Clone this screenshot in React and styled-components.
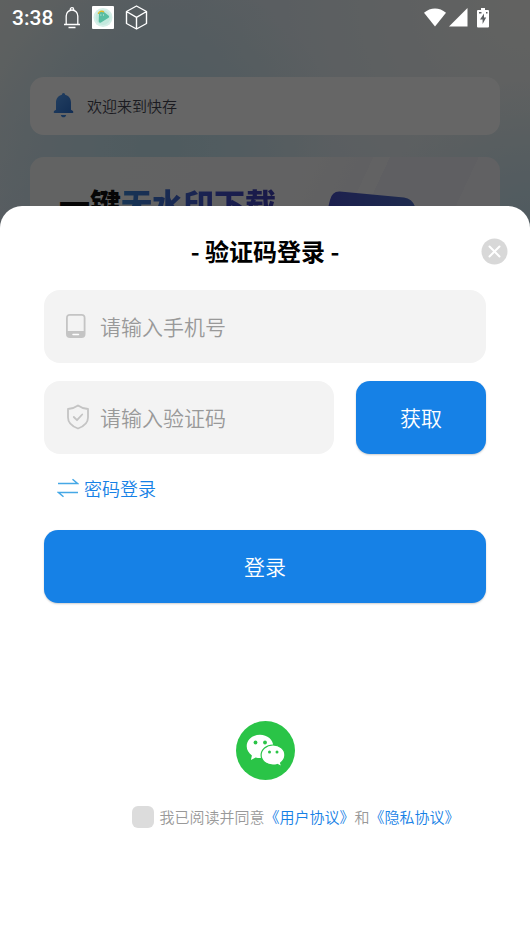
import React, { useState } from 'react';
import styled, { createGlobalStyle, css } from 'styled-components';

const colors = {
  primary: '#1681e6',
  field: '#f3f3f3',
  muted: '#999',
  icon: '#c4c4c4',
  white: '#fff',
};

const GlobalStyle = createGlobalStyle`
  *, *::before, *::after {
    box-sizing: border-box;
  }

  body {
    margin: 0;
    font-family: 'Noto Sans CJK SC', 'Noto Sans', sans-serif;
    font-weight: 350;
  }

  button, input {
    font-family: inherit;
    font-weight: inherit;
  }
`;

const Screen = styled.div`
  position: relative;
  min-height: 100vh;
  overflow: hidden;
  background:
    radial-gradient(circle at 30% 150px, #c6e4ee 20px, rgba(198, 228, 238, 0) 180px),
    radial-gradient(circle at 100% 230px, #c6e2ee, rgba(198, 226, 238, 0) 150px),
    radial-gradient(circle at 100% 0, #f6f6f2, rgba(240, 244, 240, 0) 340px),
    linear-gradient(125deg, #ecf2f0 0, #dae8f2 130px, #dae8f2 100%);
`;

const StatusBar = styled.div`
  position: relative;
  z-index: 2;
  display: flex;
  align-items: center;
  height: 35px;
  padding: 0 41px 0 12px;
  color: ${colors.white};

  svg {
    display: block;
  }
`;

const Time = styled.span`
  margin-right: 10px;
  font-family: Roboto, sans-serif;
  font-size: 21px;
  font-weight: 500;
  line-height: 24px;
`;

const StatusIcons = styled.div`
  display: flex;
  align-items: center;
  gap: ${props => props.$gap};
`;

const Signals = styled(StatusIcons)`
  margin-left: auto;

  svg:last-child {
    margin-left: 6px;
  }
`;

const Home = styled.main`
  display: flex;
  flex-direction: column;
  gap: 22px;
  padding: 42px 30px 0;
`;

const Notice = styled.div`
  display: flex;
  align-items: center;
  gap: 13px;
  height: 58px;
  padding: 0 23px 2px;
  border-radius: 14px;
  background: ${colors.white};
  color: #444452;
  font-size: 15px;
`;

const Banner = styled.div`
  display: flex;
  align-items: flex-start;
  justify-content: space-between;
  height: 180px;
  padding: 23px 82px 0 29px;
  overflow: hidden;
  border-radius: 14px;
  background: linear-gradient(
    115deg,
    #f6f8f8 0,
    #f5f5f7 50%,
    #f0f0f4 62%,
    #f5f5f8 62% 65%,
    #eeeef4 65% 81%,
    #f3f3f7 81%
  );
`;

const BannerTitle = styled.h2`
  margin: 0;
  color: #111;
  font-size: 31px;
  font-weight: 900;
  line-height: 45px;
  white-space: nowrap;

  span {
    background: linear-gradient(90deg, #3a84d4, #4150c8 60%, #4040b4);
    background-clip: text;
    color: transparent;
  }
`;

const Mask = styled.div`
  position: absolute;
  inset: 0;
  z-index: 1;
  background: rgba(0, 0, 0, 0.6);
`;

const Sheet = styled.section`
  position: absolute;
  right: 0;
  bottom: 0;
  left: 0;
  z-index: 3;
  padding: 27px 44px 114px;
  border-radius: 22px 22px 0 0;
  background: ${colors.white};
`;

const Title = styled.h1`
  margin: 0 0 21px;
  color: #000;
  font-size: 24px;
  font-weight: 700;
  line-height: 36px;
  text-align: center;
`;

const Close = styled.button`
  position: absolute;
  top: 32px;
  right: 22px;
  padding: 0;
  border: 0;
  background: none;
  cursor: pointer;

  svg {
    display: block;
  }
`;

const Form = styled.form`
  display: flex;
  flex-direction: column;
`;

const Row = styled.div`
  display: flex;
  gap: 22px;
  margin-bottom: 18px;
`;

const Field = styled.label`
  display: flex;
  flex: 1;
  align-items: center;
  gap: 10px;
  min-width: 0;
  height: 73px;
  padding: 0 20px 2px;
  border-radius: 16px;
  background: ${colors.field};

  svg {
    flex: none;
  }
`;

const Input = styled.input`
  flex: 1;
  min-width: 0;
  padding: 0;
  border: 0;
  outline: 0;
  background: none;
  color: #333;
  font-size: 21px;
  line-height: 30px;

  &::placeholder {
    color: ${colors.muted};
    opacity: 1;
  }
`;

const button = css`
  height: 73px;
  padding: 0 0 2px;
  border: 0;
  border-radius: 14px;
  background: ${colors.primary};
  box-shadow: 0 1px 2px rgba(0, 0, 0, 0.2);
  color: ${colors.white};
  font-size: 21px;
  cursor: pointer;
`;

const CodeButton = styled.button`
  ${button}
  width: 130px;
`;

const SubmitButton = styled.button`
  ${button}
  width: 100%;
`;

const SwitchButton = styled.button`
  display: flex;
  align-items: center;
  align-self: flex-start;
  gap: 5px;
  margin: 3px 0 29px;
  padding: 0 0 0 13px;
  border: 0;
  background: none;
  color: ${colors.primary};
  font-size: 18px;
  line-height: 26px;
  cursor: pointer;
`;

const WechatButton = styled.button`
  display: block;
  margin: 118px auto 0;
  padding: 0;
  border: 0;
  border-radius: 50%;
  background: none;
  cursor: pointer;

  svg {
    display: block;
  }
`;

const Agreement = styled.div`
  display: flex;
  align-items: center;
  justify-content: center;
  gap: 5px;
  margin-top: 26px;
  padding-left: 62px;
  color: ${colors.muted};
  font-size: 15px;
  line-height: 22px;
  white-space: nowrap;
`;

const Checkbox = styled.input`
  flex: none;
  width: 22px;
  height: 22px;
  margin: 0;
  border-radius: 6px;
  background: #dcdcdc;
  appearance: none;
  cursor: pointer;

  &:checked {
    background: ${colors.primary};
  }
`;

const Link = styled.a`
  color: ${colors.primary};
  text-decoration: none;
`;

const AlarmIcon = () => (
  <svg width="18" height="22" viewBox="0 0 18 22" fill="none" stroke="currentColor" strokeWidth="1.3">
    <path d="M1 17.500h16M3.200 17.500V9a5.800 6 0 0 1 11.600 0v8.500M7.300 3.300V2.400a1.700 1.700 0 0 1 3.400 0v.9M5.500 20.500h7" />
  </svg>
);

const AppIcon = () => (
  <svg width="22" height="23" viewBox="0 0 22 23">
    <rect width="22" height="23" rx="1" fill="#fff" />
    <circle cx="11" cy="11.500" r="9.500" fill="#d5efe8" />
    <circle cx="11" cy="11.500" r="7.500" fill="#c3e9de" />
    <path d="M7 7.500c1-2 3-2.500 5-1.500l4.500 3.500c1 1 .8 2-.3 2.600L9 16.500c-1.500.6-2.300 0-2.300-1.500z" fill="#58bea2" />
    <path d="M6.300 8c.4-2.500 3.500-3.600 5.700-2" fill="none" stroke="#e0b92c" strokeWidth="1.3" />
    <path d="M8.500 9h.8M11 9h.8" stroke="#fff" />
  </svg>
);

const CubeIcon = () => (
  <svg width="23" height="25" viewBox="0 0 23 25" fill="none" stroke="currentColor" strokeWidth="1.4" strokeLinejoin="round">
    <path d="M11.500 1 21.500 6.500v12l-10 5.500-10-5.500v-12zM1.500 6.500l10 5.800 10-5.800M11.500 12.300V24" />
  </svg>
);

const WifiIcon = () => (
  <svg width="22" height="19" viewBox="0 0 22 19" fill="currentColor">
    <path d="M0 4.800C6.500-.9 15.500-.9 22 4.800L11 18.500z" />
  </svg>
);

const CellIcon = () => (
  <svg width="19" height="19" viewBox="0 0 19 19" fill="currentColor">
    <path d="M18.500 0v18.500H0z" />
  </svg>
);

const BatteryIcon = () => (
  <svg width="12" height="20" viewBox="0 0 12 20">
    <path d="M4 0h4v2h3q1 0 1 1v15.500q0 1-1 1H1q-1 0-1-1V3q0-1 1-1h3z" fill="currentColor" />
    <path d="M7 5.500 3 11.500h2.600V16l3.600-6.500H7z" fill="#5c6062" />
    <path d="M2 4.800h2.500M9 4.800h1.500" stroke="#5c6062" strokeWidth="1.500" />
  </svg>
);

const BellIcon = () => (
  <svg width="21" height="25" viewBox="0 0 21 25">
    <defs>
      <linearGradient id="bell" x1="0" y1="0" x2="1" y2="1">
        <stop offset="0" stopColor="#5aa2f4" />
        <stop offset="1" stopColor="#2c6fd0" />
      </linearGradient>
    </defs>
    <path
      d="M10.500 0c1 0 1.600.8 1.600 1.800C15.700 2.600 18 5.600 18 9.500v7.300l2 1.200q1 2-.5 2h-18q-1.500 0-.5-2l2-1.200V9.500c0-3.900 2.300-6.900 5.900-7.700C8.900.8 9.500 0 10.500 0z"
      fill="url(#bell)"
    />
    <path d="M7.800 22h5.400c-.4 1.600-1.300 2.300-2.700 2.300S8.200 23.600 7.800 22z" fill="#3f8ae6" />
  </svg>
);

const BannerArt = () => (
  <svg width="90" height="100" viewBox="0 0 90 100">
    <defs>
      <linearGradient id="art">
        <stop offset="0" stopColor="#4850c4" />
        <stop offset="1" stopColor="#4c6cc4" />
      </linearGradient>
    </defs>
    <path d="M0 28 2 20Q4 11 12 11.500l64 6q8 1 11 9l3 80H0z" fill="url(#art)" />
  </svg>
);

const CloseIcon = () => (
  <svg width="27" height="27" viewBox="0 0 27 27">
    <circle cx="13.500" cy="13.500" r="13" fill="#d8d8d8" />
    <path d="m8.500 8.500 10 10m0-10-10 10" stroke="#fff" strokeWidth="2" strokeLinecap="round" />
  </svg>
);

const PhoneIcon = () => (
  <svg width="26" height="26" viewBox="0 0 26 26">
    <path
      d="M5 1h12.500Q21.500 1 21.500 5v16q0 4-4 4H6q-4 0-4-4V5q0-4 4-4zM5.500 2.800Q3.800 2.800 3.800 4.500V18h15.900V4.500q0-1.700-1.700-1.700z"
      fill={colors.icon}
      fillRule="evenodd"
    />
    <path d="M9 21.500h5.500" stroke="#fff" strokeWidth="1.500" strokeLinecap="round" />
  </svg>
);

const ShieldIcon = () => (
  <svg width="26" height="26" viewBox="0 0 26 26" fill="none" stroke={colors.icon} strokeWidth="1.800" strokeLinecap="round" strokeLinejoin="round">
    <path d="M14 1.500c3 2.200 6.300 3.200 10 3.500v8.500c0 5.500-4.500 9-10 11-5.500-2-10-5.500-10-11V5c3.700-.3 7-1.300 10-3.500z" />
    <path d="m9.800 13 3.200 3.200 5.200-5.700" />
  </svg>
);

const SwapIcon = () => (
  <svg width="22" height="20" viewBox="0 0 22 20" fill="none" stroke="#45a8e6" strokeWidth="1.500">
    <path d="M1 5.500h19.500L15.500 1.200M21 14.500H1.500l5 4.200" />
  </svg>
);

const WechatIcon = () => (
  <svg width="59" height="59" viewBox="0 0 59 59">
    <circle cx="29.500" cy="29.500" r="29.500" fill="#2ac447" />
    <path
      d="M24 13.800c-7.400 0-13.300 5-13.300 11.500 0 3.700 2 6.900 5.200 9.100l-1 4.600 4.800-2.600c1.400.4 2.800.5 4.300.5 7.400 0 13.300-5.200 13.300-11.600S31.400 13.800 24 13.800z"
      fill="#fff"
    />
    <path
      d="M37 24c6.700 0 11.900 4.400 11.900 10.100 0 3.200-1.700 6-4.300 7.800l1.200 3.800-4.400-2.200c-1.400.4-2.800.6-4.400.6-6.700 0-11.900-4.400-11.900-10S30.300 24 37 24z"
      fill="#fff"
      stroke="#2ac447"
      strokeWidth="1.200"
    />
    <g fill="#2ac447">
      <circle cx="19.500" cy="21.500" r="1.900" />
      <circle cx="29" cy="21.500" r="1.900" />
      <circle cx="33.500" cy="31" r="1.500" />
      <circle cx="41" cy="31" r="1.500" />
    </g>
  </svg>
);

const LoginSheet = () => {
  const [phone, setPhone] = useState('');
  const [code, setCode] = useState('');
  const [agreed, setAgreed] = useState(false);

  return (
    <Sheet role="dialog" aria-labelledby="login-title">
      <Title id="login-title">- 验证码登录 -</Title>
      <Close type="button" aria-label="关闭">
        <CloseIcon />
      </Close>
      <Form onSubmit={e => e.preventDefault()}>
        <Row>
          <Field>
            <PhoneIcon />
            <Input
              type="tel"
              aria-label="手机号"
              placeholder="请输入手机号"
              value={phone}
              onChange={e => setPhone(e.target.value)}
            />
          </Field>
        </Row>
        <Row>
          <Field>
            <ShieldIcon />
            <Input
              aria-label="验证码"
              placeholder="请输入验证码"
              value={code}
              onChange={e => setCode(e.target.value)}
            />
          </Field>
          <CodeButton type="button">获取</CodeButton>
        </Row>
        <SwitchButton type="button">
          <SwapIcon />
          密码登录
        </SwitchButton>
        <SubmitButton type="submit">登录</SubmitButton>
      </Form>
      <WechatButton type="button" aria-label="微信登录">
        <WechatIcon />
      </WechatButton>
      <Agreement>
        <Checkbox
          id="agree"
          type="checkbox"
          checked={agreed}
          onChange={e => setAgreed(e.target.checked)}
        />
        <div>
          <label htmlFor="agree">我已阅读并同意</label>
          <Link href="#terms">《用户协议》</Link>和<Link href="#privacy">《隐私协议》</Link>
        </div>
      </Agreement>
    </Sheet>
  );
};

export default () => (
  <>
    <GlobalStyle />
    <Screen>
      <StatusBar>
        <Time>3:38</Time>
        <StatusIcons $gap="11px">
          <AlarmIcon />
          <AppIcon />
          <CubeIcon />
        </StatusIcons>
        <Signals $gap="3px">
          <WifiIcon />
          <CellIcon />
          <BatteryIcon />
        </Signals>
      </StatusBar>
      <Home>
        <Notice>
          <BellIcon />
          欢迎来到快存
        </Notice>
        <Banner>
          <BannerTitle>
            一键<span>无水印下载</span>
          </BannerTitle>
          <BannerArt />
        </Banner>
      </Home>
      <Mask />
      <LoginSheet />
    </Screen>
  </>
);
